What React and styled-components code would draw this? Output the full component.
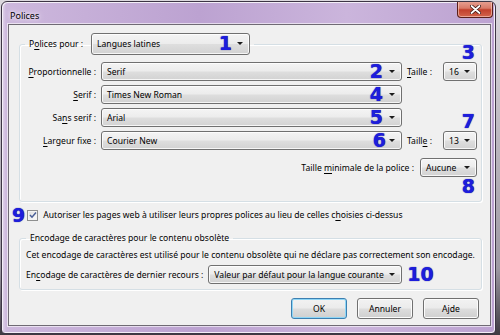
import styled, { createGlobalStyle } from "styled-components";

const GlobalStyle = createGlobalStyle`
  html, body {
    margin: 0;
    padding: 0;
    background: #c9c4cc;
  }
  body {
    font-family: "Noto Sans", "Open Sans", sans-serif;
    font-size: 8.6px;
    color: #000;
  }
`;

const Desktop = styled.div`
  width: 500px;
  height: 335px;
  padding: 1px 0 0 1px;
  box-sizing: border-box;
  background: linear-gradient(#dcd8de, #9e99a3 80%, #3e3a42);
`;

const Window = styled.div`
  width: 495px;
  height: 333px;
  box-sizing: border-box;
  border: 1px solid #3d3545;
  border-radius: 6px 6px 4px 4px;
  background: linear-gradient(
    90deg,
    #e4d8ec 0px,
    #cdb8dd 4px,
    #bca2d1 40%,
    #cbb5dc 70%,
    #bca2d1 100%
  );
  box-shadow: inset 1px 1px 0 #f3eef7, inset -1px -1px 0 #f3eef7;
  display: flex;
  flex-direction: column;
  padding: 0 4px 7px 6px;
  overflow: hidden;
`;

const TitleBar = styled.div`
  height: 22px;
  display: flex;
  align-items: flex-start;
`;

const Title = styled.div`
  padding: 7px 0 0 2px;
  font-size: 9px;
  color: #000;
  text-shadow: 0 0 6px #f5effa, 0 0 3px #f5effa;
`;

const CloseButton = styled.div`
  margin: -1px -2px 0 auto;
  width: 36px;
  height: 17px;
  box-sizing: border-box;
  border: 1px solid #5a1f1a;
  border-top: none;
  border-radius: 0 0 4px 4px;
  background: linear-gradient(#e8a395 0%, #d97a68 45%, #c2402c 55%, #d2644c 100%);
  box-shadow: inset 0 0 0 1px rgba(255, 220, 210, 0.55);
  display: flex;
  align-items: center;
  justify-content: center;
`;

const Client = styled.div`
  flex: 1;
  border: 1px solid #6f6a74;
  background: #f0f0f0;
  box-shadow: 0 0 0 1px rgba(255, 255, 255, 0.6);
  padding: 8px 8px 6px 10px;
  display: flex;
  flex-direction: column;
`;

const Group = styled.fieldset`
  margin: 0;
  border: 1px solid #d5dfe5;
  border-radius: 3px;
  box-shadow: inset 1px 1px 0 #fff, 1px 1px 0 #fff;
  padding: ${(p) => p.$pad};
  min-width: 0;
`;

const Legend = styled.legend`
  padding: 0 4px 0 4px;
  margin-left: ${(p) => p.$indent || 0}px;
  display: flex;
  align-items: center;
  gap: 8px;
`;

const FontGrid = styled.div`
  display: grid;
  grid-template-columns: 72px 301px 1fr 34px;
  column-gap: 5px;
  row-gap: 4px;
  align-items: center;
`;

const Label = styled.span`
  text-align: ${(p) => (p.$left ? "left" : "right")};
  white-space: nowrap;
`;

const Key = styled.span`
  text-decoration: underline;
  text-underline-offset: 1.5px;
`;

const MinRow = styled.div`
  grid-column: 1 / -1;
  display: flex;
  justify-content: flex-end;
  align-items: center;
  gap: 6px;
  margin-top: 4px;
`;

const Combo = styled.div`
  position: relative;
  display: flex;
  align-items: center;
  height: ${(p) => p.$h || 19}px;
  width: ${(p) => (p.$w ? `${p.$w}px` : "auto")};
  box-sizing: border-box;
  padding: 0 16px 0 5px;
  border: 1px solid #707070;
  border-radius: 3px;
  background: linear-gradient(#f4f4f4 0%, #ececec 48%, #dedede 52%, #d2d2d2 100%);
  box-shadow: inset 0 0 0 1px rgba(255, 255, 255, 0.8);
  white-space: nowrap;

  &::after {
    content: "";
    position: absolute;
    right: 6px;
    top: 50%;
    margin-top: -2px;
    border-left: 3px solid transparent;
    border-right: 3px solid transparent;
    border-top: 3.5px solid #1a1a1a;
  }
`;

const Mark = styled.span`
  font-family: "DejaVu Sans", sans-serif;
  font-weight: 700;
  font-size: 19px;
  line-height: 1;
  color: #1d1ddc;
  text-shadow: 0 0 1px #0a0a7a;
`;

const InnerMark = styled(Mark)`
  position: absolute;
  right: ${(p) => p.$right}px;
  top: 50%;
  transform: translateY(-52%);
`;

const EdgeMark = styled(Mark)`
  position: absolute;
  right: 1px;
  ${(p) => (p.$below ? "top: calc(100% + 1px);" : "bottom: calc(100% + 1px);")}
`;

const CheckRow = styled.div`
  display: flex;
  align-items: center;
  margin: 5px 0 0 -7px;
  height: 16px;
`;

const Box = styled.span`
  width: 9px;
  height: 9px;
  margin: 0 5px 0 2px;
  border: 1px solid #8e8f8f;
  background: linear-gradient(135deg, #dedede, #fdfdfd);
  box-shadow: inset 0 0 0 1px #f4f4f4;
  display: flex;
  align-items: center;
  justify-content: center;
`;

const Note = styled.div`
  margin: 3px 0 4px;
  white-space: nowrap;
`;

const FallbackRow = styled.div`
  display: flex;
  align-items: center;
  gap: 5px;
`;

const ButtonBar = styled.div`
  margin-top: auto;
  display: flex;
  justify-content: flex-end;
  gap: 10px;
  padding-right: 3px;
`;

const Button = styled.button`
  width: 56px;
  height: 21px;
  font: inherit;
  color: #000;
  border: 1px solid ${(p) => (p.$default ? "#3c7fb1" : "#707070")};
  border-radius: 3px;
  background: linear-gradient(#f2f2f2 0%, #ebebeb 48%, #dddddd 52%, #cfcfcf 100%);
  box-shadow: inset 0 0 0 1px ${(p) => (p.$default ? "#8fd6f6" : "#fcfcfc")};
  padding: 0;
`;

function Select({ value, width, height, inner, right = 17, above, below }) {
  return (
    <Combo $w={width} $h={height}>
      {value}
      {inner && <InnerMark $right={right}>{inner}</InnerMark>}
      {above && <EdgeMark>{above}</EdgeMark>}
      {below && <EdgeMark $below>{below}</EdgeMark>}
    </Combo>
  );
}

export default function App() {
  return (
    <>
      <GlobalStyle />
      <Desktop>
        <Window>
          <TitleBar>
            <Title>Polices</Title>
            <CloseButton>
              <svg width="11" height="9" viewBox="0 0 11 9">
                <path
                  d="M1.5 1 L9.5 8 M9.5 1 L1.5 8"
                  stroke="#3a1410"
                  strokeWidth="3.4"
                  strokeLinecap="round"
                />
                <path
                  d="M1.5 1 L9.5 8 M9.5 1 L1.5 8"
                  stroke="#fff"
                  strokeWidth="1.8"
                  strokeLinecap="round"
                />
              </svg>
            </CloseButton>
          </TitleBar>

          <Client>
            <Group $pad="7px 4px 24px 4px">
              <Legend $indent={1}>
                <span>
                  P<Key>o</Key>lices pour :
                </span>
                <Select value="Langues latines" width={159} height={22} inner="1" />
              </Legend>

              <FontGrid>
                <Label>
                  <Key>P</Key>roportionnelle :
                </Label>
                <Select value="Serif" inner="2" right={18} />
                <Label $left>
                  <Key>T</Key>aille :
                </Label>
                <Select value="16" above="3" />

                <Label>
                  <Key>S</Key>erif :
                </Label>
                <Select value="Times New Roman" inner="4" right={18} />
                <span />
                <span />

                <Label>
                  Sa<Key>n</Key>s serif :
                </Label>
                <Select value="Arial" inner="5" right={18} />
                <span />
                <span />

                <Label>
                  <Key>L</Key>argeur fixe :
                </Label>
                <Select value="Courier New" inner="6" right={15} />
                <Label $left>
                  Taill<Key>e</Key> :
                </Label>
                <Select value="13" above="7" />

                <MinRow>
                  <Label>
                    Taille <Key>m</Key>inimale de la police :
                  </Label>
                  <Select value="Aucune" width={57} below="8" />
                </MinRow>
              </FontGrid>
            </Group>

            <CheckRow>
              <Mark>9</Mark>
              <Box>
                <svg width="8" height="8" viewBox="0 0 8 8">
                  <path
                    d="M1 4 L3 6.2 L7 1.5"
                    fill="none"
                    stroke="#4a5f97"
                    strokeWidth="1.5"
                  />
                </svg>
              </Box>
              <span>
                Autoriser les pages web à utiliser leurs propres polices au lieu de celles c
                <Key>h</Key>oisies ci-dessus
              </span>
            </CheckRow>

            <Group $pad="2px 6px 5px 6px" style={{ marginTop: 9 }}>
              <Legend>Encodage de caractères pour le contenu obsolète</Legend>
              <Note>
                Cet encodage de caractères est utilisé pour le contenu obsolète qui ne déclare pas
                correctement son encodage.
              </Note>
              <FallbackRow>
                <Label>
                  En<Key>c</Key>odage de caractères de dernier recours :
                </Label>
                <Select value="Valeur par défaut pour la langue courante" width={194} />
                <Mark>10</Mark>
              </FallbackRow>
            </Group>

            <ButtonBar>
              <Button $default>OK</Button>
              <Button>Annuler</Button>
              <Button>Ajde</Button>
            </ButtonBar>
          </Client>
        </Window>
      </Desktop>
    </>
  );
}
